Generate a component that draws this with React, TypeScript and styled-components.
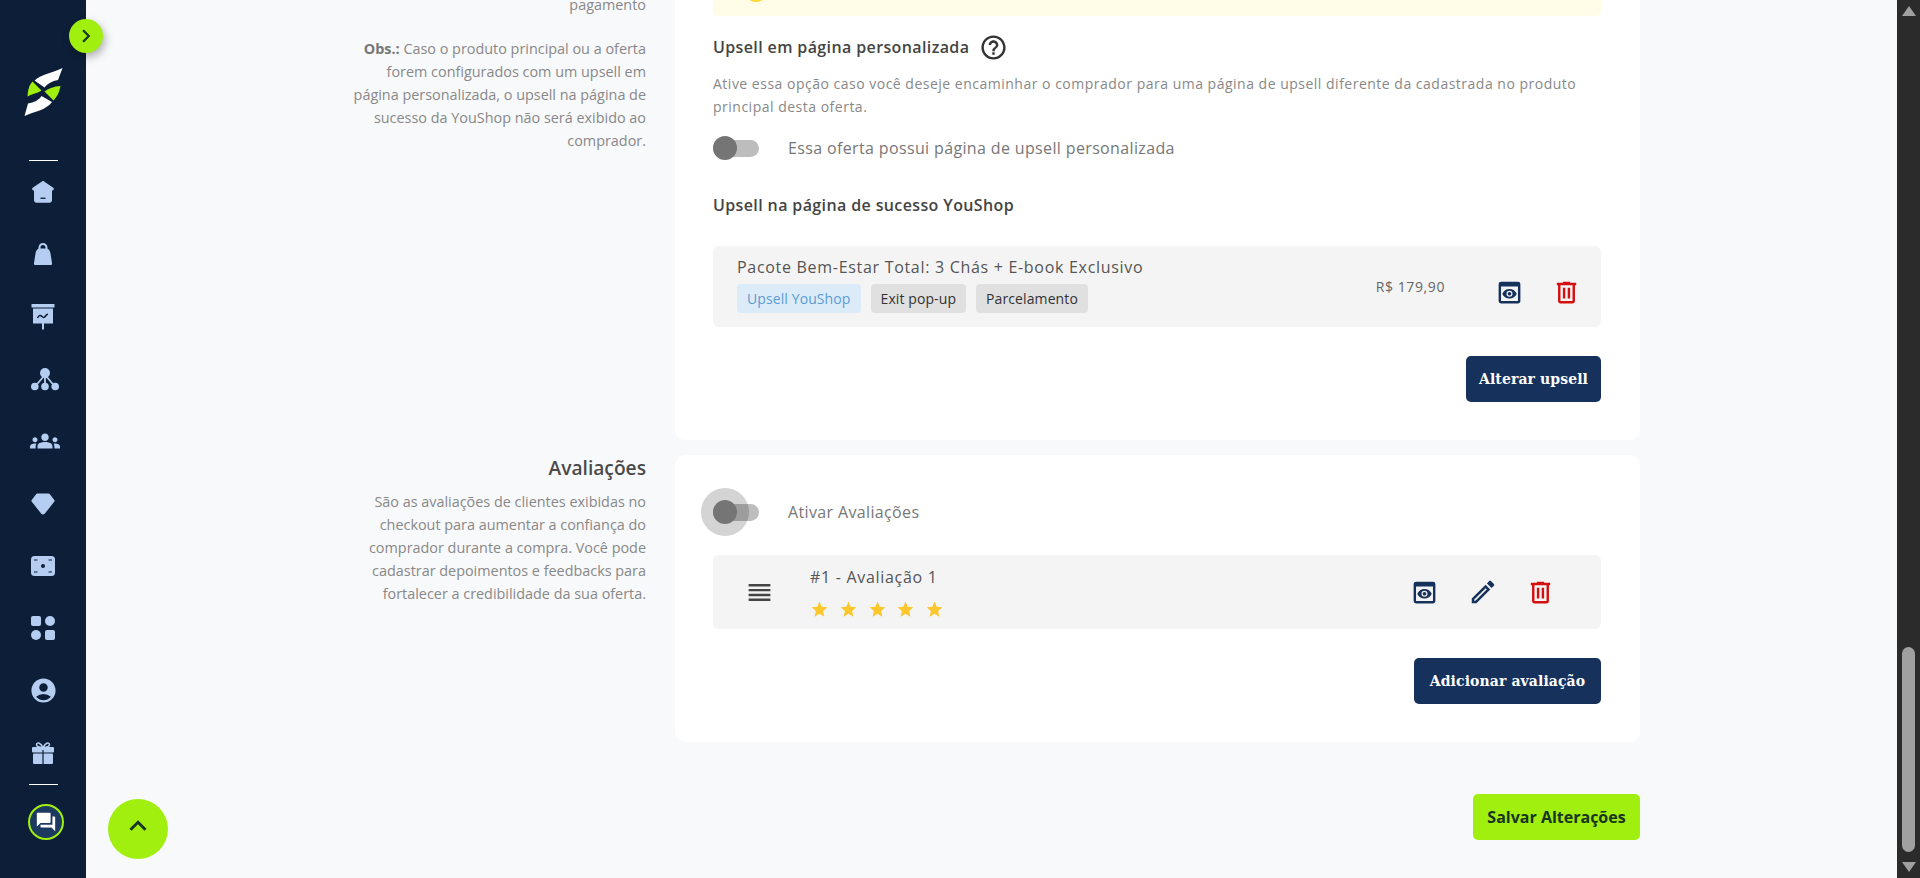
import * as React from "react";
import styled, { createGlobalStyle } from "styled-components";
import {
  MdAccountCircle,
  MdForum,
  MdGroups,
  MdHelpOutline,
  MdKeyboardArrowRight,
  MdKeyboardArrowUp,
  MdOutlineEdit,
  MdPreview,
  MdReorder,
  MdStar
} from "react-icons/md";

const NAVY = "#0d1f38";
const BLUE = "#16325c";
const ICON = "#b5cdf0";
const LIME = "#a0ef0e";
const RED = "#d50f0f";

const GlobalStyle = createGlobalStyle`
  html, body {
    margin: 0;
    padding: 0;
    height: 100%;
    overflow: hidden;
    background: #f8f9fb;
    font-family: "Open Sans", "Liberation Sans", sans-serif;
  }
  #root {
    height: 100%;
  }
`;

const HomeIcon = () => (
  <svg width="24" height="24" viewBox="0 0 24 24">
    <path
      fill={ICON}
      d="M12 1c.4 0 .8.1 1.1.4l9.2 6.4c1 .7.6 2.6-.7 2.6H21V20c0 1.6-1.1 2.8-2.5 2.8h-13C4.1 22.800 3 21.600 3 20v-9.600h-.6C1.100 10.400.6 8.500 1.700 7.800l9.200-6.400C11.200 1.100 11.600 1 12 1Z"
    />
    <rect x="9.500" y="17.600" width="5" height="1.300" fill={NAVY} />
  </svg>
);

const BagIcon = () => (
  <svg width="24" height="24" viewBox="0 0 24 24">
    <path fill="none" stroke={ICON} strokeWidth="2" d="M8.500 8V5.500a3.500 3.500 0 0 1 7 0V8" />
    <path
      fill={ICON}
      d="M9 6.500C6 6.500 5 9 4.500 11.500L3 21c-.2 1.200.4 2 1.500 2h15c1.100 0 1.700-.8 1.500-2l-1.500-9.500C19 9 18 6.500 15 6.500Z"
    />
  </svg>
);

const BoardIcon = () => (
  <svg width="24" height="26" viewBox="0 0 24 26">
    <rect x="0.500" y="0" width="23" height="3.500" rx="0.500" fill={ICON} />
    <rect x="2" y="4.500" width="20" height="15" fill={ICON} />
    <rect x="11" y="19" width="2" height="6.500" fill={ICON} />
    <path
      fill="none"
      stroke={NAVY}
      strokeWidth="1.500"
      d="M6.500 14c1.500-3 3-3 4.500-1.500s2.500 1 3.500-.5 1.500-1.500 2.500-1.800"
    />
  </svg>
);

const HubIcon = () => (
  <svg width="28" height="24" viewBox="0 0 28 24">
    <circle cx="14" cy="6" r="5" fill={ICON} />
    <circle cx="3.800" cy="19.500" r="3.800" fill={ICON} />
    <circle cx="14" cy="19.500" r="3.800" fill={ICON} />
    <circle cx="24.200" cy="19.500" r="3.800" fill={ICON} />
    <path fill="none" stroke={ICON} strokeWidth="1.800" d="M14 8v11M13 9 4.500 19M15 9l8.500 10" />
  </svg>
);

const DiamondIcon = () => (
  <svg width="24" height="24" viewBox="0 0 24 24">
    <path
      fill={ICON}
      d="M6.500 1.500h11c.6 0 1.100.3 1.400.7l4.400 5.800c.4.600.4 1.300-.1 1.800L13.700 21.800c-.9 1-2.500 1-3.400 0L.8 9.800C.3 9.300.3 8.600.7 8l4.400-5.800c.3-.4.8-.7 1.400-.7Z"
    />
  </svg>
);

const MoneyIcon = () => (
  <svg width="24" height="20" viewBox="0 0 24 20">
    <rect width="24" height="20" rx="3.500" fill={ICON} />
    <circle cx="12" cy="10" r="2" fill={NAVY} />
    <path stroke={NAVY} strokeWidth="1.100" d="M3 4h3.500M17.500 4H21M3 16h3.500M17.500 16H21" />
  </svg>
);

const AppsIcon = () => (
  <svg width="24" height="24" viewBox="0 0 24 24">
    <rect width="10" height="10" rx="2" fill={ICON} />
    <circle cx="19" cy="5" r="5" fill={ICON} />
    <circle cx="5" cy="19" r="5" fill={ICON} />
    <rect x="14" y="14" width="10" height="10" rx="2" fill={ICON} />
  </svg>
);

const GiftIcon = () => (
  <svg width="24" height="24" viewBox="0 0 24 24">
    <path
      fill="none"
      stroke={ICON}
      strokeWidth="1.500"
      d="M12 6.500C10 2 6 .5 5.500 3.500c-.3 2 3 3 6.500 3ZM12 6.500c2-4.500 6-6 6.500-3 .3 2-3 3-6.500 3Z"
    />
    <rect x="1" y="6" width="22" height="5.500" rx="1" fill={ICON} />
    <rect x="2" y="12.500" width="20" height="10.500" rx="1" fill={ICON} />
    <rect x="11.400" y="9" width="1.200" height="14" fill={NAVY} />
  </svg>
);

const TrashIcon = () => (
  <svg width="29" height="29" viewBox="0 0 24 24">
    <path
      fill={RED}
      d="M7 21q-.825 0-1.412-.587Q5 19.825 5 19V6H4V4h5V3h6v1h5v2h-1v13q0 .825-.587 1.413Q17.825 21 17 21ZM17 6H7v13h10ZM9 17h2V8H9Zm4 0h2V8h-2Z"
    />
  </svg>
);

const Logo = () => (
  <svg width="50" height="64" viewBox="0 0 50 64">
    <path fill="#ffffff" d="M44.500 8 40 20C34 21 29.500 23.500 26.500 27.500L16.500 20.500C24 14 34 13 44.500 8Z" />
    <path fill={LIME} d="M14.500 21.500 23.500 30.500C20 33 14 34 9.500 36.500 10 30 11 25 14.500 21.500Z" />
    <path fill={LIME} d="M42.500 26C36 26.500 31 28 26.500 31.500L35.500 40.500C39 37 41.500 32 42.500 26Z" />
    <path fill="#ffffff" d="M6.500 56 10 43.500C16 42.500 21 40 23.500 36L34 42C28 50 18 51 6.500 56Z" />
  </svg>
);

const navItems: { icon: React.ReactNode; shift?: boolean }[] = [
  { icon: <HomeIcon /> },
  { icon: <BagIcon /> },
  { icon: <BoardIcon /> },
  { icon: <HubIcon />, shift: true },
  { icon: <MdGroups size={30} color={ICON} />, shift: true },
  { icon: <DiamondIcon /> },
  { icon: <MoneyIcon /> },
  { icon: <AppsIcon /> },
  { icon: <MdAccountCircle size={29} color={ICON} /> },
  { icon: <GiftIcon /> }
];

const tags = [
  { label: "Upsell YouShop", info: true },
  { label: "Exit pop-up", info: false },
  { label: "Parcelamento", info: false }
];

const App: React.FC = () => {
  return (
    <Page>
      <GlobalStyle />
      <Sidebar>
        <Collapse>
          <MdKeyboardArrowRight size={26} color="#17351f" />
        </Collapse>
        <LogoSlot>
          <Logo />
        </LogoSlot>
        <Divider />
        {navItems.map((item, i) => (
          <NavItem key={i} $shift={item.shift}>
            {item.icon}
          </NavItem>
        ))}
        <Divider />
        <ChatButton>
          <MdForum size={22} color="#ffffff" />
        </ChatButton>
      </Sidebar>

      <Main>
        <Content>
          <Section>
            <ScrolledAside>
              <AsideText>pagamento</AsideText>
              <AsideText>
                <b>Obs.:</b> Caso o produto principal ou a oferta forem configurados com um upsell em
                página personalizada, o upsell na página de sucesso da YouShop não será exibido ao
                comprador.
              </AsideText>
            </ScrolledAside>
            <Card>
              <Alert>
                <AlertDot />
              </Alert>
              <HeadingRow>
                <Heading>Upsell em página personalizada</Heading>
                <MdHelpOutline size={29} color="#333333" />
              </HeadingRow>
              <Description>
                Ative essa opção caso você deseje encaminhar o comprador para uma página de upsell
                diferente da cadastrada no produto principal desta oferta.
              </Description>
              <ToggleRow>
                <Toggle />
                <ToggleLabel>Essa oferta possui página de upsell personalizada</ToggleLabel>
              </ToggleRow>
              <SubHeading>Upsell na página de sucesso YouShop</SubHeading>
              <UpsellRow>
                <UpsellInfo>
                  <ItemTitle>Pacote Bem-Estar Total: 3 Chás + E-book Exclusivo</ItemTitle>
                  <TagList>
                    {tags.map(tag => (
                      <Tag key={tag.label} $info={tag.info}>
                        {tag.label}
                      </Tag>
                    ))}
                  </TagList>
                </UpsellInfo>
                <Price>R$ 179,90</Price>
                <UpsellActions>
                  <MdPreview size={29} color={BLUE} />
                  <TrashIcon />
                </UpsellActions>
              </UpsellRow>
              <ButtonRow>
                <PrimaryButton $width={135}>Alterar upsell</PrimaryButton>
              </ButtonRow>
            </Card>
          </Section>

          <Section>
            <Aside>
              <AsideTitle>Avaliações</AsideTitle>
              <AsideText>
                São as avaliações de clientes exibidas no checkout para aumentar a confiança do
                comprador durante a compra. Você pode cadastrar depoimentos e feedbacks para
                fortalecer a credibilidade da sua oferta.
              </AsideText>
            </Aside>
            <Card>
              <ReviewToggleRow>
                <Toggle $focused />
                <ToggleLabel>Ativar Avaliações</ToggleLabel>
              </ReviewToggleRow>
              <ReviewRow>
                <MdReorder size={29} color="#444444" />
                <ReviewInfo>
                  <ItemTitle>#1 - Avaliação 1</ItemTitle>
                  <Stars>
                    {[1, 2, 3, 4, 5].map(n => (
                      <MdStar key={n} size={19} color="#fcc72c" />
                    ))}
                  </Stars>
                </ReviewInfo>
                <ReviewActions>
                  <MdPreview size={29} color={BLUE} />
                  <MdOutlineEdit size={30} color={BLUE} />
                  <TrashIcon />
                </ReviewActions>
              </ReviewRow>
              <ButtonRow>
                <PrimaryButton $width={187}>Adicionar avaliação</PrimaryButton>
              </ButtonRow>
            </Card>
          </Section>

          <SaveRow>
            <SaveButton>Salvar Alterações</SaveButton>
          </SaveRow>
        </Content>
        <BackToTop>
          <MdKeyboardArrowUp size={34} color="#17351f" />
        </BackToTop>
      </Main>

      <Scrollbar>
        <ArrowUp />
        <Thumb />
        <ArrowDown />
      </Scrollbar>
    </Page>
  );
};

const Page = styled.div`
  display: flex;
  height: 100%;
  overflow: hidden;
`;

const Sidebar = styled.nav`
  position: relative;
  z-index: 2;
  flex: 0 0 86px;
  display: flex;
  flex-direction: column;
  align-items: center;
  background: ${NAVY};
`;

const Collapse = styled.div`
  position: absolute;
  top: 19px;
  right: -17px;
  width: 34px;
  height: 34px;
  display: flex;
  align-items: center;
  justify-content: center;
  border-radius: 50%;
  background: ${LIME};
  box-shadow: 2px 4px 8px rgba(0, 0, 0, 0.3);
`;

const LogoSlot = styled.div`
  height: 64px;
  margin-top: 60px;
  margin-bottom: 36px;
`;

const Divider = styled.div`
  flex: none;
  width: 29px;
  height: 1px;
  background: #ffffff;
`;

const NavItem = styled.div<{ $shift?: boolean }>`
  flex: none;
  width: 100%;
  box-sizing: border-box;
  height: 62.3px;
  display: flex;
  align-items: center;
  justify-content: center;
  padding-left: ${p => (p.$shift ? "4px" : "0")};
`;

const ChatButton = styled.div`
  flex: none;
  width: 32px;
  height: 32px;
  margin: 19px 0 0 5px;
  display: flex;
  align-items: center;
  justify-content: center;
  border: 2px solid ${LIME};
  border-radius: 50%;
  background: #1c3a60;
`;

const Main = styled.main`
  position: relative;
  flex: 1;
  min-width: 0;
  overflow: hidden;
  background: #f8f9fb;
`;

/* the page is photographed scrolled down, hence the negative top */
const Content = styled.div`
  display: flex;
  flex-direction: column;
  gap: 15.5px;
  width: 1554px;
  box-sizing: border-box;
  margin-top: -40px;
  padding-left: 260px;
`;

const Section = styled.section`
  display: grid;
  grid-template-columns: 300px 965px;
  column-gap: 29px;
  align-items: start;
`;

const Aside = styled.div`
  display: flex;
  flex-direction: column;
  gap: 9px;
  text-align: right;
`;

const ScrolledAside = styled(Aside)`
  gap: 21px;
  padding-top: 33px;
`;

const AsideTitle = styled.h3`
  margin: 0;
  font-size: 19.2px;
  line-height: 26px;
  font-weight: 600;
  color: #4a4a4a;
`;

const AsideText = styled.p`
  margin: 0;
  font-size: 14.4px;
  line-height: 23px;
  color: #888888;
  b {
    font-weight: 700;
    color: #777777;
  }
`;

const Card = styled.div`
  box-sizing: border-box;
  padding: 0 39px 38px 38px;
  background: #ffffff;
  border-radius: 10px;
`;

const Alert = styled.div`
  position: relative;
  height: 56px;
  background: #fffde7;
  border-radius: 0 0 5px 5px;
`;

const AlertDot = styled.div`
  position: absolute;
  left: 31px;
  bottom: 14px;
  width: 24px;
  height: 24px;
  border-radius: 50%;
  background: #fdd835;
`;

const HeadingRow = styled.div`
  display: flex;
  align-items: center;
  gap: 10px;
  height: 24px;
  margin-top: 19px;
`;

const Heading = styled.h4`
  margin: 0;
  font-size: 16px;
  line-height: 24px;
  font-weight: 600;
  letter-spacing: 0.38px;
  color: #444444;
`;

const SubHeading = styled(Heading)`
  margin-top: 33px;
`;

const Description = styled.p`
  margin: 13px 0 0;
  font-size: 14px;
  line-height: 23px;
  letter-spacing: 0.5px;
  color: #888888;
`;

const ToggleRow = styled.div`
  display: flex;
  align-items: center;
  gap: 29px;
  height: 24px;
  margin-top: 18px;
`;

const ReviewToggleRow = styled(ToggleRow)`
  margin-top: 0;
  padding-top: 45px;
`;

const Toggle = styled.div<{ $focused?: boolean }>`
  position: relative;
  flex: none;
  width: 46px;
  height: 17px;
  border-radius: 9px;
  background: #bdbdbd;
  &::before {
    content: "";
    position: absolute;
    left: -12px;
    top: -15.5px;
    width: 48px;
    height: 48px;
    border-radius: 50%;
    background: ${p => (p.$focused ? "rgba(0, 0, 0, 0.17)" : "transparent")};
  }
  &::after {
    content: "";
    position: absolute;
    left: 0;
    top: -3.5px;
    width: 24px;
    height: 24px;
    border-radius: 50%;
    background: #757575;
  }
`;

const ToggleLabel = styled.span`
  font-size: 16px;
  letter-spacing: 0.36px;
  color: #777777;
`;

const UpsellRow = styled.div`
  display: flex;
  align-items: center;
  height: 81px;
  box-sizing: border-box;
  margin-top: 29px;
  padding: 0 20px 0 24px;
  background: #f4f4f4;
  border-radius: 6px;
`;

const UpsellInfo = styled.div`
  flex: 1;
  display: flex;
  flex-direction: column;
  gap: 6px;
  margin-bottom: 4px;
`;

const ItemTitle = styled.div`
  font-size: 16px;
  line-height: 22px;
  letter-spacing: 0.7px;
  color: #555555;
`;

const TagList = styled.div`
  display: flex;
  gap: 10px;
`;

const Tag = styled.span<{ $info: boolean }>`
  height: 29px;
  padding: 0 10px;
  display: flex;
  align-items: center;
  font-size: 14px;
  letter-spacing: 0.1px;
  border-radius: 4px;
  color: ${p => (p.$info ? "#5b9bd5" : "#333333")};
  background: ${p => (p.$info ? "#dcebf8" : "#e0e0e0")};
`;

const Price = styled.span`
  margin-right: 50px;
  font-size: 14px;
  letter-spacing: 0.6px;
  color: #666666;
`;

const UpsellActions = styled.div`
  display: flex;
  align-items: center;
  gap: 28px;
  margin-top: 12px;
`;

const ReviewRow = styled.div`
  display: flex;
  align-items: center;
  height: 74px;
  box-sizing: border-box;
  margin-top: 31px;
  padding: 0 32px 0 32px;
  background: #f4f4f4;
  border-radius: 6px;
`;

const ReviewInfo = styled.div`
  flex: 1;
  margin-left: 36px;
  display: flex;
  flex-direction: column;
  gap: 12px;
`;

const Stars = styled.div`
  display: flex;
  gap: 9.8px;
`;

const ReviewActions = styled.div`
  display: flex;
  align-items: center;
  gap: 28.5px;
  margin-right: 14px;
`;

const ButtonRow = styled.div`
  display: flex;
  justify-content: flex-end;
  margin-top: 29px;
`;

const PrimaryButton = styled.button<{ $width: number }>`
  width: ${p => p.$width}px;
  height: 45.5px;
  padding: 0;
  border: 0;
  border-radius: 5px;
  background: ${BLUE};
  color: #ffffff;
  font-family: "DejaVu Serif", "Liberation Serif", serif;
  font-size: 14px;
  font-weight: 700;
  letter-spacing: 0.1px;
`;

const SaveRow = styled.div`
  display: flex;
  justify-content: flex-end;
  margin-top: 37px;
`;

const SaveButton = styled.button`
  width: 167px;
  height: 46px;
  padding: 0;
  border: 0;
  border-radius: 5px;
  background: ${LIME};
  color: #17351f;
  font-family: "Open Sans", "Liberation Sans", sans-serif;
  font-size: 16px;
  font-weight: 700;
`;

const BackToTop = styled.div`
  position: absolute;
  left: 22px;
  bottom: 19px;
  width: 60px;
  height: 60px;
  display: flex;
  align-items: center;
  justify-content: center;
  border-radius: 50%;
  background: ${LIME};
  & > svg {
    margin-bottom: 6px;
  }
`;

const Scrollbar = styled.div`
  flex: 0 0 23px;
  display: flex;
  flex-direction: column;
  align-items: center;
  background: #2b2b2b;
`;

const ArrowUp = styled.div`
  margin-top: 6px;
  width: 0;
  height: 0;
  border-left: 7.5px solid transparent;
  border-right: 7.5px solid transparent;
  border-bottom: 10px solid #a0a0a0;
`;

const Thumb = styled.div`
  width: 13px;
  height: 205px;
  margin-top: auto;
  border-radius: 7px;
  background: #a0a0a0;
`;

const ArrowDown = styled.div`
  margin: 10px 0 6px;
  width: 0;
  height: 0;
  border-left: 7.5px solid transparent;
  border-right: 7.5px solid transparent;
  border-top: 10px solid #a0a0a0;
`;

export default App;
